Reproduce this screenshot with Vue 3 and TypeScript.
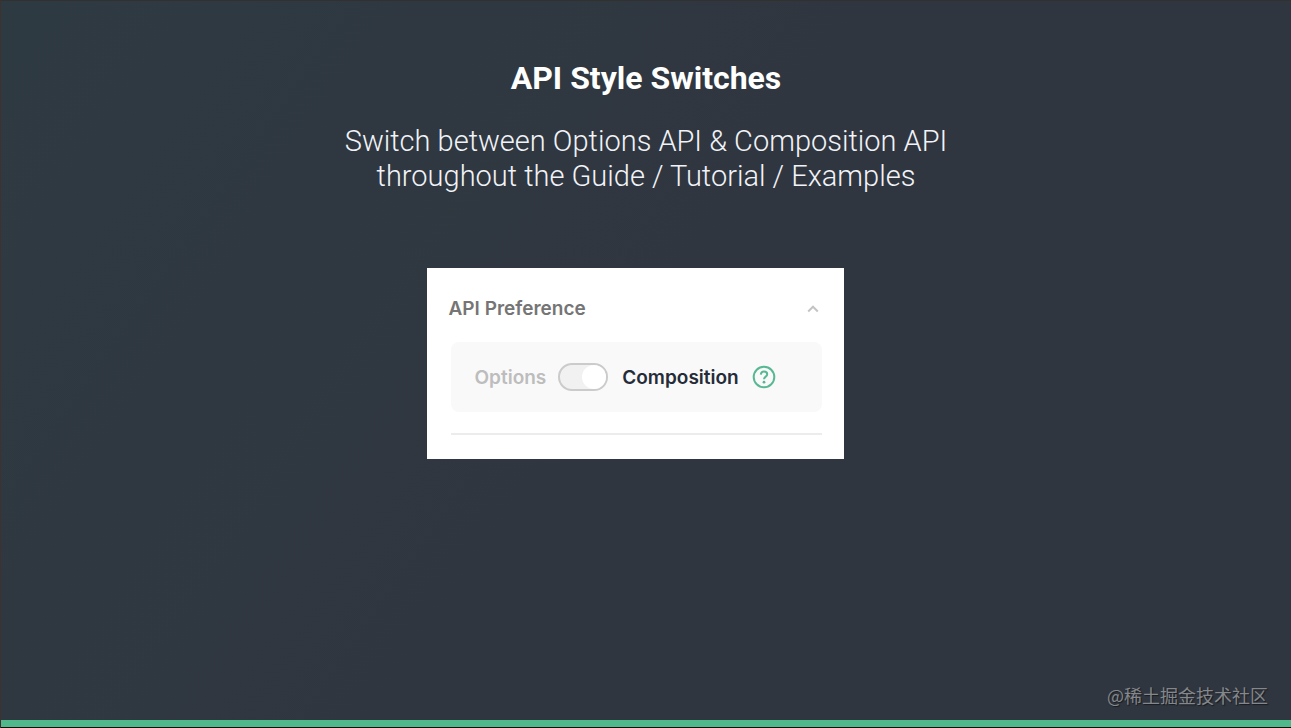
<script setup lang="ts">
import { ref } from 'vue'

const composition = ref(true)
const expanded = ref(true)
</script>

<template>
  <main class="slide">
    <header class="heading">
      <h1>API Style Switches</h1>
      <p>
        Switch between Options API &amp; Composition API<br />
        throughout the Guide / Tutorial / Examples
      </p>
    </header>

    <section class="card">
      <button class="toggle" type="button" :aria-expanded="expanded" @click="expanded = !expanded">
        <span>API Preference</span>
        <svg class="chevron" viewBox="0 0 12 8" aria-hidden="true">
          <path d="M1.200 6.500 6 1.700l4.800 4.800" />
        </svg>
      </button>
      <div v-if="expanded" class="preference">
        <label class="off" for="api-switch">Options</label>
        <input id="api-switch" v-model="composition" class="switch" type="checkbox" role="switch" />
        <label class="on" for="api-switch">Composition</label>
        <button class="help" type="button" aria-label="About API preference">
          <svg viewBox="0 0 24 24" aria-hidden="true">
            <circle cx="12" cy="12" r="10.300" />
            <path d="M8.800 9.600c.2-2 1.400-3.100 3.200-3.100 1.900 0 3.200 1.100 3.200 2.700 0 2.400-3.200 2.400-3.200 5" />
            <circle class="dot" cx="12" cy="17.200" r="1.400" />
          </svg>
        </button>
      </div>
      <hr />
    </section>

    <footer>
      <span class="credit">@稀土掘金技术社区</span>
      <div class="bar"></div>
    </footer>
  </main>
</template>

<style>
body {
  background: #30363f;
}
</style>

<style scoped>
.slide {
  box-sizing: border-box;
  min-height: 100vh;
  display: flex;
  flex-direction: column;
  align-items: center;
  background: linear-gradient(125deg, #2e3a42 0%, #30363f 50%, #30363f 100%);
  border-top: 1px solid #33312f;
  border-left: 1px solid #40302f;
  font-family: Roboto, "Liberation Sans", sans-serif;
  color: #fff;
}

.heading {
  padding-top: 57px;
  text-align: center;
}

h1 {
  margin: 0;
  font-size: 32px;
  line-height: 40px;
  font-weight: 700;
}

p {
  margin: 26px 0 0;
  font-size: 29px;
  line-height: 35px;
  font-weight: 340;
  color: #f1f3f8;
}

.card {
  box-sizing: border-box;
  width: 417px;
  max-width: 100%;
  margin: 74px 22px 0 0;
  padding: 24px 22px;
  background: #fff;
  font-family: Inter, "Liberation Sans", sans-serif;
  font-size: 19px;
  font-weight: 600;
}

button {
  padding: 0;
  border: 0;
  background: none;
  font: inherit;
  cursor: pointer;
}

.toggle {
  width: 100%;
  display: flex;
  align-items: center;
  justify-content: space-between;
  line-height: 34px;
  color: #757575;
}

.chevron {
  width: 12px;
  height: 8px;
  margin-right: 3px;
  fill: none;
  stroke: #c4c4c4;
  stroke-width: 2;
}

.preference {
  display: flex;
  align-items: center;
  height: 70px;
  margin: 16px 0 21px 2px;
  padding-left: 24px;
  border-radius: 8px;
  background: #f9f9f9;
}

.off {
  color: #bdbdbd;
}

.on {
  color: #252c38;
}

.switch {
  appearance: none;
  box-sizing: border-box;
  width: 50px;
  height: 28px;
  margin: 0 14px 0 12px;
  border: 2px solid #cbcbcb;
  border-radius: 14px;
  background: #f1f1f1;
  cursor: pointer;
}

.switch::before {
  content: "";
  display: block;
  width: 24px;
  height: 24px;
  border-radius: 50%;
  background: #fff;
}

.switch:checked::before {
  margin-left: auto;
}

.help {
  width: 24px;
  height: 24px;
  margin-left: 13px;
}

.help svg {
  display: block;
  fill: none;
  stroke: #59b894;
  stroke-width: 2;
}

.help .dot {
  fill: #59b894;
  stroke: none;
}

hr {
  height: 2px;
  margin: 0 0 0 2px;
  border: 0;
  background: #ececec;
}

footer {
  align-self: stretch;
  display: flex;
  flex-direction: column;
  margin-top: auto;
}

.credit {
  align-self: flex-end;
  margin: 0 23px 12px 0;
  font-family: "Noto Sans CJK SC", sans-serif;
  font-size: 18px;
  line-height: 26px;
  color: #84878b;
  text-shadow: 1px 1px 1px #171b20;
}

.bar {
  height: 7px;
  background: #50b88a;
  border-bottom: 1px solid #080b09;
}
</style>
